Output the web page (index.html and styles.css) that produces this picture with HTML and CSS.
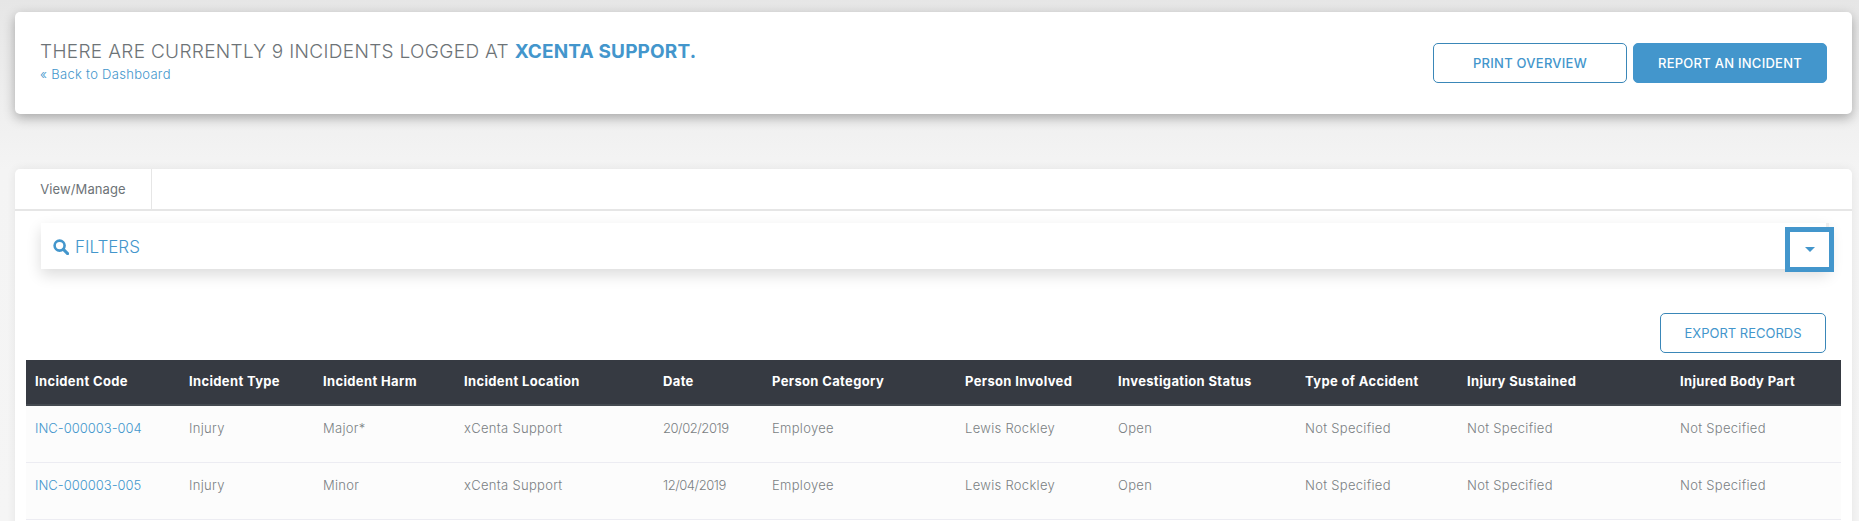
FILE: index.html
```html
<!DOCTYPE html>
<html lang="en">
<head>
  <meta charset="UTF-8">
  <meta name="viewport" content="width=device-width, initial-scale=1.0">
  <title>Incidents</title>
  <link rel="stylesheet" href="styles.css">
</head>
<body>
  <header class="summary">
    <div class="summary-text">
      <h1>There are currently 9 incidents logged at <strong>xCenta Support.</strong></h1>
      <a class="back" href="#">« Back to Dashboard</a>
    </div>
    <div class="actions">
      <a class="btn" href="#">Print Overview</a>
      <a class="btn btn-solid" href="#">Report an Incident</a>
    </div>
  </header>

  <section class="panel">
    <nav class="tabs">
      <a class="tab" href="#">View/Manage</a>
    </nav>
    <div class="panel-body">
      <div class="filters">
        <span class="filters-title">
          <svg class="search-icon" viewBox="0 0 16 16" width="16" height="16">
            <circle cx="6.6" cy="6.6" r="5" fill="none" stroke="currentColor" stroke-width="2.6"/>
            <line x1="10.4" y1="10.4" x2="14.6" y2="14.6" stroke="currentColor" stroke-width="3" stroke-linecap="round"/>
          </svg>
          Filters
        </span>
        <button class="filters-toggle" type="button" aria-label="Toggle filters"><span class="caret"></span></button>
      </div>
      <div class="table-tools">
        <a class="btn btn-export" href="#">Export Records</a>
      </div>
      <table class="records">
        <colgroup>
          <col class="c-code"><col class="c-type"><col class="c-harm"><col class="c-location"><col class="c-date"><col class="c-category"><col class="c-person"><col class="c-status"><col class="c-accident"><col class="c-injury"><col class="c-body">
        </colgroup>
        <thead>
          <tr>
            <th>Incident Code</th>
            <th>Incident Type</th>
            <th>Incident Harm</th>
            <th>Incident Location</th>
            <th>Date</th>
            <th>Person Category</th>
            <th>Person Involved</th>
            <th>Investigation Status</th>
            <th>Type of Accident</th>
            <th>Injury Sustained</th>
            <th>Injured Body Part</th>
          </tr>
        </thead>
        <tbody>
          <tr>
            <td><a class="code" href="#">INC-000003-004</a></td>
            <td>Injury</td>
            <td>Major*</td>
            <td>xCenta Support</td>
            <td class="date">20/02/2019</td>
            <td>Employee</td>
            <td>Lewis Rockley</td>
            <td>Open</td>
            <td>Not Specified</td>
            <td>Not Specified</td>
            <td>Not Specified</td>
          </tr>
          <tr>
            <td><a class="code" href="#">INC-000003-005</a></td>
            <td>Injury</td>
            <td>Minor</td>
            <td>xCenta Support</td>
            <td class="date">12/04/2019</td>
            <td>Employee</td>
            <td>Lewis Rockley</td>
            <td>Open</td>
            <td>Not Specified</td>
            <td>Not Specified</td>
            <td>Not Specified</td>
          </tr>
        </tbody>
      </table>
    </div>
  </section>
</body>
</html>
```

FILE: styles.css
```css
html, body {
  height: 521px;
  overflow: hidden;
}
body {
  margin: 0;
  padding: 12px 7px 0 15px;
  box-sizing: border-box;
  font-family: Inter, "Open Sans", sans-serif;
  font-weight: 300;
  color: #6d7377;
  background: linear-gradient(#e6e6e6 0, #f4f4f4 170px, #f5f5f5 100%);
}
a {
  color: #4396cc;
  text-decoration: none;
}

.summary {
  display: flex;
  justify-content: space-between;
  align-items: center;
  height: 102px;
  padding: 0 25px;
  box-sizing: border-box;
  background: #fff;
  border-radius: 5px;
  box-shadow: 0 4px 12px rgba(0, 0, 0, 0.3);
}
.summary-text {
  padding-bottom: 3px;
}
.summary h1 {
  margin: 0;
  font-size: 19px;
  font-weight: 300;
  letter-spacing: 0.33px;
  color: #6d7377;
  text-transform: uppercase;
}
.summary strong {
  font-weight: 700;
  letter-spacing: 0.15px;
  color: #4396cc;
}
.back {
  font-size: 13px;
  letter-spacing: 0.3px;
}
.actions {
  display: flex;
  gap: 6px;
}

.btn {
  display: block;
  width: 194px;
  height: 40px;
  box-sizing: border-box;
  border: 1px solid #3a87b8;
  border-radius: 5px;
  background: #fff;
  font-size: 13px;
  font-weight: 500;
  letter-spacing: 0.25px;
  line-height: 38px;
  text-align: center;
  text-transform: uppercase;
}
.btn-solid {
  background: #4396cc;
  border-color: #4396cc;
  color: #fff;
}
.btn-export {
  width: 166px;
  font-weight: 400;
  letter-spacing: 0;
}

.panel {
  margin-top: 55px;
  height: 400px;
  background: #fff;
  border-radius: 5px 5px 0 0;
  box-shadow: 0 0 10px rgba(0, 0, 0, 0.07);
}
.tabs {
  height: 42px;
  box-sizing: border-box;
  border-bottom: 2px solid #e6e6e6;
}
.tab {
  display: block;
  width: 137px;
  height: 41px;
  box-sizing: border-box;
  border-right: 1px solid #e6e6e6;
  font-size: 13px;
  font-weight: 400;
  letter-spacing: 0.1px;
  line-height: 41px;
  text-align: center;
  color: #6d7377;
}
.panel-body {
  padding: 12px 11px 0;
}

.filters {
  display: flex;
  justify-content: space-between;
  align-items: center;
  height: 46px;
  margin: 0 12px 0 15px;
  padding-left: 12px;
  background: #fff;
  border-right: 3px solid #eee;
  box-shadow: 0 6px 14px rgba(0, 0, 0, 0.14);
}
.filters-title {
  display: flex;
  align-items: center;
  gap: 6px;
  padding-top: 2px;
  font-size: 17px;
  color: #4396cc;
  text-transform: uppercase;
}
.search-icon {
  flex: none;
}
.filters-toggle {
  display: flex;
  align-items: center;
  justify-content: center;
  width: 49px;
  height: 45px;
  margin: 7px -8px 0 0;
  padding: 0;
  background: #fff;
  border: 5px solid #4396cc;
}
.caret {
  width: 0;
  height: 0;
  border-left: 5.5px solid transparent;
  border-right: 5.5px solid transparent;
  border-top: 5.5px solid #4396cc;
}

.table-tools {
  display: flex;
  justify-content: flex-end;
  margin: 44px 15px 7px 0;
}

.records {
  width: 100%;
  table-layout: fixed;
  border-collapse: collapse;
  font-size: 13px;
}
.c-code { width: 154px; }
.c-type { width: 134px; }
.c-harm { width: 141px; }
.c-location { width: 199px; }
.c-date { width: 109px; }
.c-category { width: 193px; }
.c-person { width: 153px; }
.c-status { width: 187px; }
.c-accident { width: 162px; }
.c-injury { width: 213px; }

.records th {
  height: 45px;
  box-sizing: border-box;
  padding: 0 0 2px 9px;
  background: #363a42;
  border-bottom: 2px solid #454a51;
  color: #fff;
  font-weight: 700;
  letter-spacing: 0.35px;
  text-align: left;
  white-space: nowrap;
}
.records td {
  height: 57px;
  box-sizing: border-box;
  padding: 0 0 12px 9px;
  background: #fcfcfc;
  border-bottom: 1px solid #ececf2;
  color: #7a7f83;
  letter-spacing: 0.3px;
}
.records td.date {
  letter-spacing: -0.45px;
}
.code {
  letter-spacing: 0;
}
```
